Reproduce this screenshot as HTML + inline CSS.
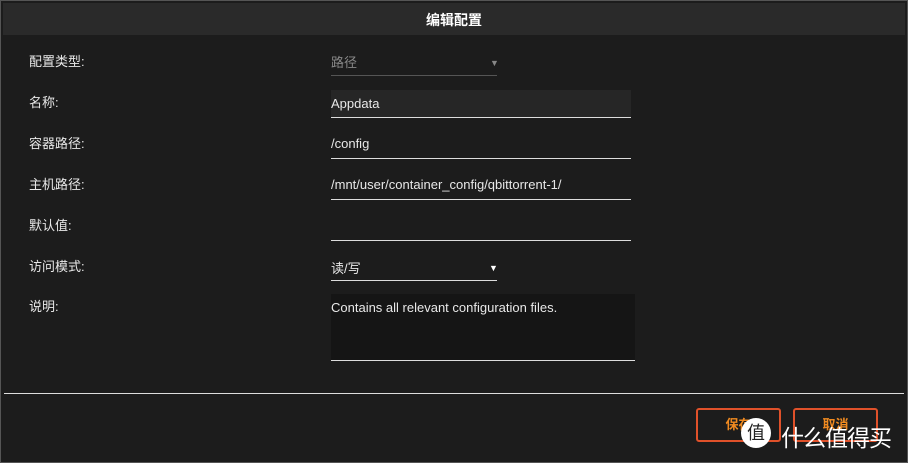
<!DOCTYPE html><html><head><meta charset="utf-8"><style>
body{margin:0;width:908px;height:463px;background:#1c1c1c;overflow:hidden;font-family:"Liberation Sans","Noto Sans CJK SC",sans-serif;color:#e8e8e8;font-size:13px;position:relative}
.a{position:absolute}
.hd{left:3px;top:3px;width:902px;height:32px;background:#2a2a2a;text-align:center;line-height:34px;font-weight:bold;font-size:14px;color:#fff}
.l{left:29px}
.f{left:331px;border-bottom:1px solid #ddd}
.b{border:2px solid #e0512a;border-radius:3px;height:30px;width:81px;color:#f08a20;font-weight:bold;text-align:center;line-height:30px}
</style></head><body>
<div class="a" style="left:0;top:0;width:906px;height:461px;border:1px solid #555"></div>
<div class="a hd">编辑配置</div>
<div class="a l" style="top:51px">配置类型:</div>
<div class="a l" style="top:92px">名称:</div>
<div class="a l" style="top:133px">容器路径:</div>
<div class="a l" style="top:174px">主机路径:</div>
<div class="a l" style="top:215px">默认值:</div>
<div class="a l" style="top:256px">访问模式:</div>
<div class="a l" style="top:296px">说明:</div>
<div class="a f" style="top:52px;width:166px;height:23px;color:#888;border-color:#555">路径<span class="a" style="left:159px;top:6px;font-size:9px">▼</span></div>
<div class="a f" style="top:90px;width:300px;height:27px;background:#262626;line-height:27px">Appdata</div>
<div class="a f" style="top:136px;width:300px;height:22px">/config</div>
<div class="a f" style="top:177px;width:300px;height:22px">/mnt/user/container_config/qbittorrent-1/</div>
<div class="a f" style="top:218px;width:300px;height:22px"></div>
<div class="a f" style="top:258px;width:166px;height:22px">读/写<span class="a" style="left:158px;top:5px;font-size:9px;color:#fff">▼</span></div>
<div class="a f" style="top:294px;width:304px;height:67px;background:#151515;padding-top:6px;box-sizing:border-box">Contains all relevant configuration files.</div>
<div class="a" style="left:4px;top:393px;width:900px;height:1px;background:#ddd"></div>
<div class="a b" style="left:696px;top:408px">保存</div>
<div class="a b" style="left:793px;top:408px">取消</div>
<div class="a" style="left:741px;top:418px;width:30px;height:30px;border-radius:50%;background:#fff;color:#222;text-align:center;line-height:30px;font-size:18px">值</div>
<div class="a" style="left:781px;top:419px;font-size:23px;color:#fff;letter-spacing:-1px">什么值得买</div>
</body></html>
